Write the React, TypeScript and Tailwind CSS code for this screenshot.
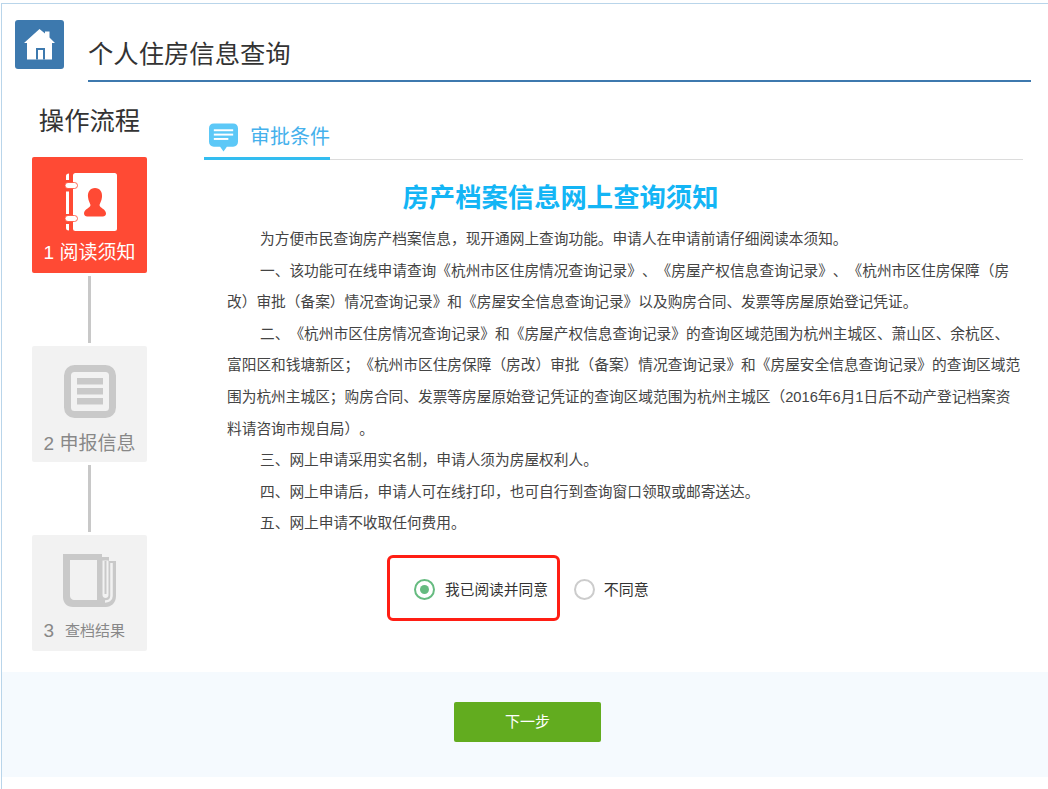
const LINES = [
  { text: "为方便市民查询房产档案信息，现开通网上查询功能。申请人在申请前请仔细阅读本须知。", indent: true },
  { text: "一、该功能可在线申请查询《杭州市区住房情况查询记录》、《房屋产权信息查询记录》、《杭州市区住房保障（房", indent: true },
  { text: "改）审批（备案）情况查询记录》和《房屋安全信息查询记录》以及购房合同、发票等房屋原始登记凭证。", indent: false },
  { text: "二、《杭州市区住房情况查询记录》和《房屋产权信息查询记录》的查询区域范围为杭州主城区、萧山区、余杭区、", indent: true },
  { text: "富阳区和钱塘新区；《杭州市区住房保障（房改）审批（备案）情况查询记录》和《房屋安全信息查询记录》的查询区域范", indent: false },
  { text: "围为杭州主城区；购房合同、发票等房屋原始登记凭证的查询区域范围为杭州主城区（2016年6月1日后不动产登记档案资", indent: false },
  { text: "料请咨询市规自局）。", indent: false },
  { text: "三、网上申请采用实名制，申请人须为房屋权利人。", indent: true },
  { text: "四、网上申请后，申请人可在线打印，也可自行到查询窗口领取或邮寄送达。", indent: true },
  { text: "五、网上申请不收取任何费用。", indent: true },
];

function HomeIcon() {
  return (
    <svg width="31" height="31" viewBox="0 0 31 31" fill="none">
      <path d="M15.500 0 L21 4.500 V2.500 H25.500 V8.500 L31 14 H28 V30.500 H3 V14 H0 Z" fill="#fff" />
      <path d="M12 30.500 V19 H21 V30.500 H19 V21 H14 V30.500 Z" fill="#3d79ae" />
    </svg>
  );
}

function ContactsIcon() {
  return (
    <svg width="52" height="58" viewBox="0 0 52 58" fill="none">
      <rect x="8" y="0" width="44" height="58" rx="2.500" fill="#fff" />
      <path d="M1 3 Q1 0.500 4 0.500 V7 H1 Z M1 18.500 H4 V41 H1 Z M1 51 H4 V57.500 Q1 57.500 1 55 Z" fill="#fff" />
      <rect x="0" y="9.500" width="12.500" height="6" rx="3" fill="#fff" stroke="#ff4a34" strokeWidth="0.8" />
      <rect x="0" y="42.500" width="12.500" height="6" rx="3" fill="#fff" stroke="#ff4a34" strokeWidth="0.8" />
      <path d="M30 15 C25 15 22.500 19 23 24 C23.400 28 25 30 25.500 32 C25.500 35 19 36 19 40.500 C19 43 21 43.500 24 43.500 H36 C39 43.500 41 43 41 40.500 C41 36 34.500 35 34.500 32 C35 30 36.600 28 37 24 C37.500 19 35 15 30 15 Z" fill="#ff4a34" />
    </svg>
  );
}

function ListIcon() {
  return (
    <svg width="52" height="53" viewBox="0 0 52 53" fill="none">
      <rect x="3.500" y="3.500" width="45" height="46" rx="7" stroke="#c9c9c9" strokeWidth="7" fill="none" />
      <rect x="13" y="13" width="26" height="6.500" fill="#c9c9c9" />
      <rect x="13" y="23" width="26" height="6.500" fill="#c9c9c9" />
      <rect x="13" y="33" width="26" height="6.500" fill="#c9c9c9" />
    </svg>
  );
}

function BookIcon() {
  return (
    <svg width="53" height="53" viewBox="0 0 53 53" fill="none">
      <path d="M0 0 H39 V3 H46 V7 H53 V42 C53 49 48 53 43 53 H10 C4 53 0 49 0 43 Z" fill="#c9c9c9" />
      <path d="M7 6 H34 V46 H11 C9 46 7 44 7 42 Z" fill="#f2f2f2" />
      <path d="M39.500 6.500 H45.500 V41 C45.500 45 39.500 45 39.500 41 Z" fill="#f2f2f2" />
      <rect x="41.500" y="7" width="2" height="33" fill="#c9c9c9" />
      <path d="M48.500 9 V42 C48.500 46 45 47.500 42 47.500" stroke="#f2f2f2" strokeWidth="2.500" />
    </svg>
  );
}

function BubbleIcon() {
  return (
    <svg width="30" height="29" viewBox="0 0 30 29" fill="none">
      <path d="M5 0 H25 C28 0 30 2 30 5 V19 C30 22 28 24 25 24 H18.500 L15 29 L11.500 24 H5 C2 24 0 22 0 19 V5 C0 2 2 0 5 0 Z" fill="#5cc8f7" />
      <rect x="5" y="6" width="20" height="2" fill="#fff" />
      <rect x="5" y="10.500" width="20" height="2" fill="#fff" />
      <rect x="5" y="15" width="15" height="2" fill="#fff" />
    </svg>
  );
}

function Connector() {
  return <div className="mx-auto my-[3px] h-[67px] w-[3px] bg-[#c8c8c8]" />;
}

export default function App() {
  return (
    <div
      className="h-[789px] w-[1048px] overflow-hidden bg-white text-[#333] [text-spacing-trim:space-all]"
      style={{ fontFamily: '"Liberation Sans", "Noto Sans CJK SC", sans-serif' }}
    >
      <div className="ml-px mt-[3px] h-[786px] border-t border-l border-[#b9d5ea]">
        {/* Header */}
        <div className="flex pl-[13px] pt-4">
          <div className="flex h-[49px] w-[49px] items-center justify-center rounded-[3px] bg-[#3d79ae]">
            <HomeIcon />
          </div>
          <div className="ml-[24px] mr-[17px] h-[62px] flex-1 border-b-2 border-[#3d79ae] pt-[15px] text-[25.33px] leading-[38px]">
            个人住房信息查询
          </div>
        </div>

        <div className="flex h-[590px]">
          {/* Steps */}
          <div className="ml-[30px] w-[115px] shrink-0 pt-[21px]">
            <div className="h-[37px] whitespace-nowrap text-center text-[25.33px] leading-[37px]">操作流程</div>
            <div className="mt-[17px] flex h-[116px] flex-col items-center rounded-[2px] bg-[#ff4a34] pt-[16px] text-white">
              <div className="ml-[3px]">
                <ContactsIcon />
              </div>
              <div className="mt-[10px] text-[19px] leading-[24px]">1 阅读须知</div>
            </div>
            <Connector />
            <div className="flex h-[116px] flex-col items-center rounded-[2px] bg-[#f2f2f2] pt-[19px] text-[#888]">
              <ListIcon />
              <div className="mt-[14px] text-[19px] leading-[24px]">2 申报信息</div>
            </div>
            <Connector />
            <div className="flex h-[116px] flex-col items-center rounded-[2px] bg-[#f2f2f2] pt-[19px] text-[#888]">
              <BookIcon />
              <div className="mt-[12px] flex w-[92px] items-center text-[19px] leading-[24px]">
                3<span className="ml-[11px] text-[15px]">查档结果</span>
              </div>
            </div>
          </div>

          {/* Content */}
          <div className="ml-[57px] mr-[25px] flex-1 pt-[38px]">
            <div className="flex h-[40px] border-b border-[#dcdcdc]">
              <div className="-mb-px flex w-[126px] items-start border-b-[3px] border-[#33bdf0] pl-[5px] pt-[3px]">
                <BubbleIcon />
                <span className="ml-[12px] whitespace-nowrap text-[20px] leading-[28px] text-[#45b1ec]">审批条件</span>
              </div>
            </div>
            <h1 className="mt-[21px] pr-[106px] text-center text-[26.33px] font-bold leading-[34px] text-[#13b5f5]">
              房产档案信息网上查询须知
            </h1>
            <div className="ml-[23px] mt-[9px] text-[14.7px] leading-[31.6px] text-[#444]">
              {LINES.map((line) => (
                <div key={line.text} className={`whitespace-nowrap ${line.indent ? "pl-[33px]" : ""}`}>
                  {line.text}
                </div>
              ))}
            </div>
            <div className="relative ml-[184px] mt-[18px] flex h-[64px] items-center text-[14.7px]">
              <div className="pointer-events-none absolute left-[-1px] top-[-3px] h-[66px] w-[173px] rounded-[6px] border-[3px] border-[#ff1e14]" />
              <span className="ml-[26px] flex h-[21px] w-[21px] items-center justify-center rounded-full border-2 border-[#66bb80]">
                <span className="h-[9px] w-[9px] rounded-full bg-[#66bb80]" />
              </span>
              <span className="ml-[10px]">我已阅读并同意</span>
              <span className="ml-[26px] h-[21px] w-[21px] rounded-full border-2 border-[#cccccc]" />
              <span className="ml-[9px] text-[15px]">不同意</span>
            </div>
          </div>
        </div>

        {/* Footer */}
        <div className="flex h-[105px] justify-center bg-[#f5fafe] pl-[5px] pt-[30px]">
          <button
            type="button"
            className="h-[40px] w-[147px] rounded-[2px] bg-[#62ac1f] text-[15px] text-white"
          >
            下一步
          </button>
        </div>
      </div>
    </div>
  );
}
